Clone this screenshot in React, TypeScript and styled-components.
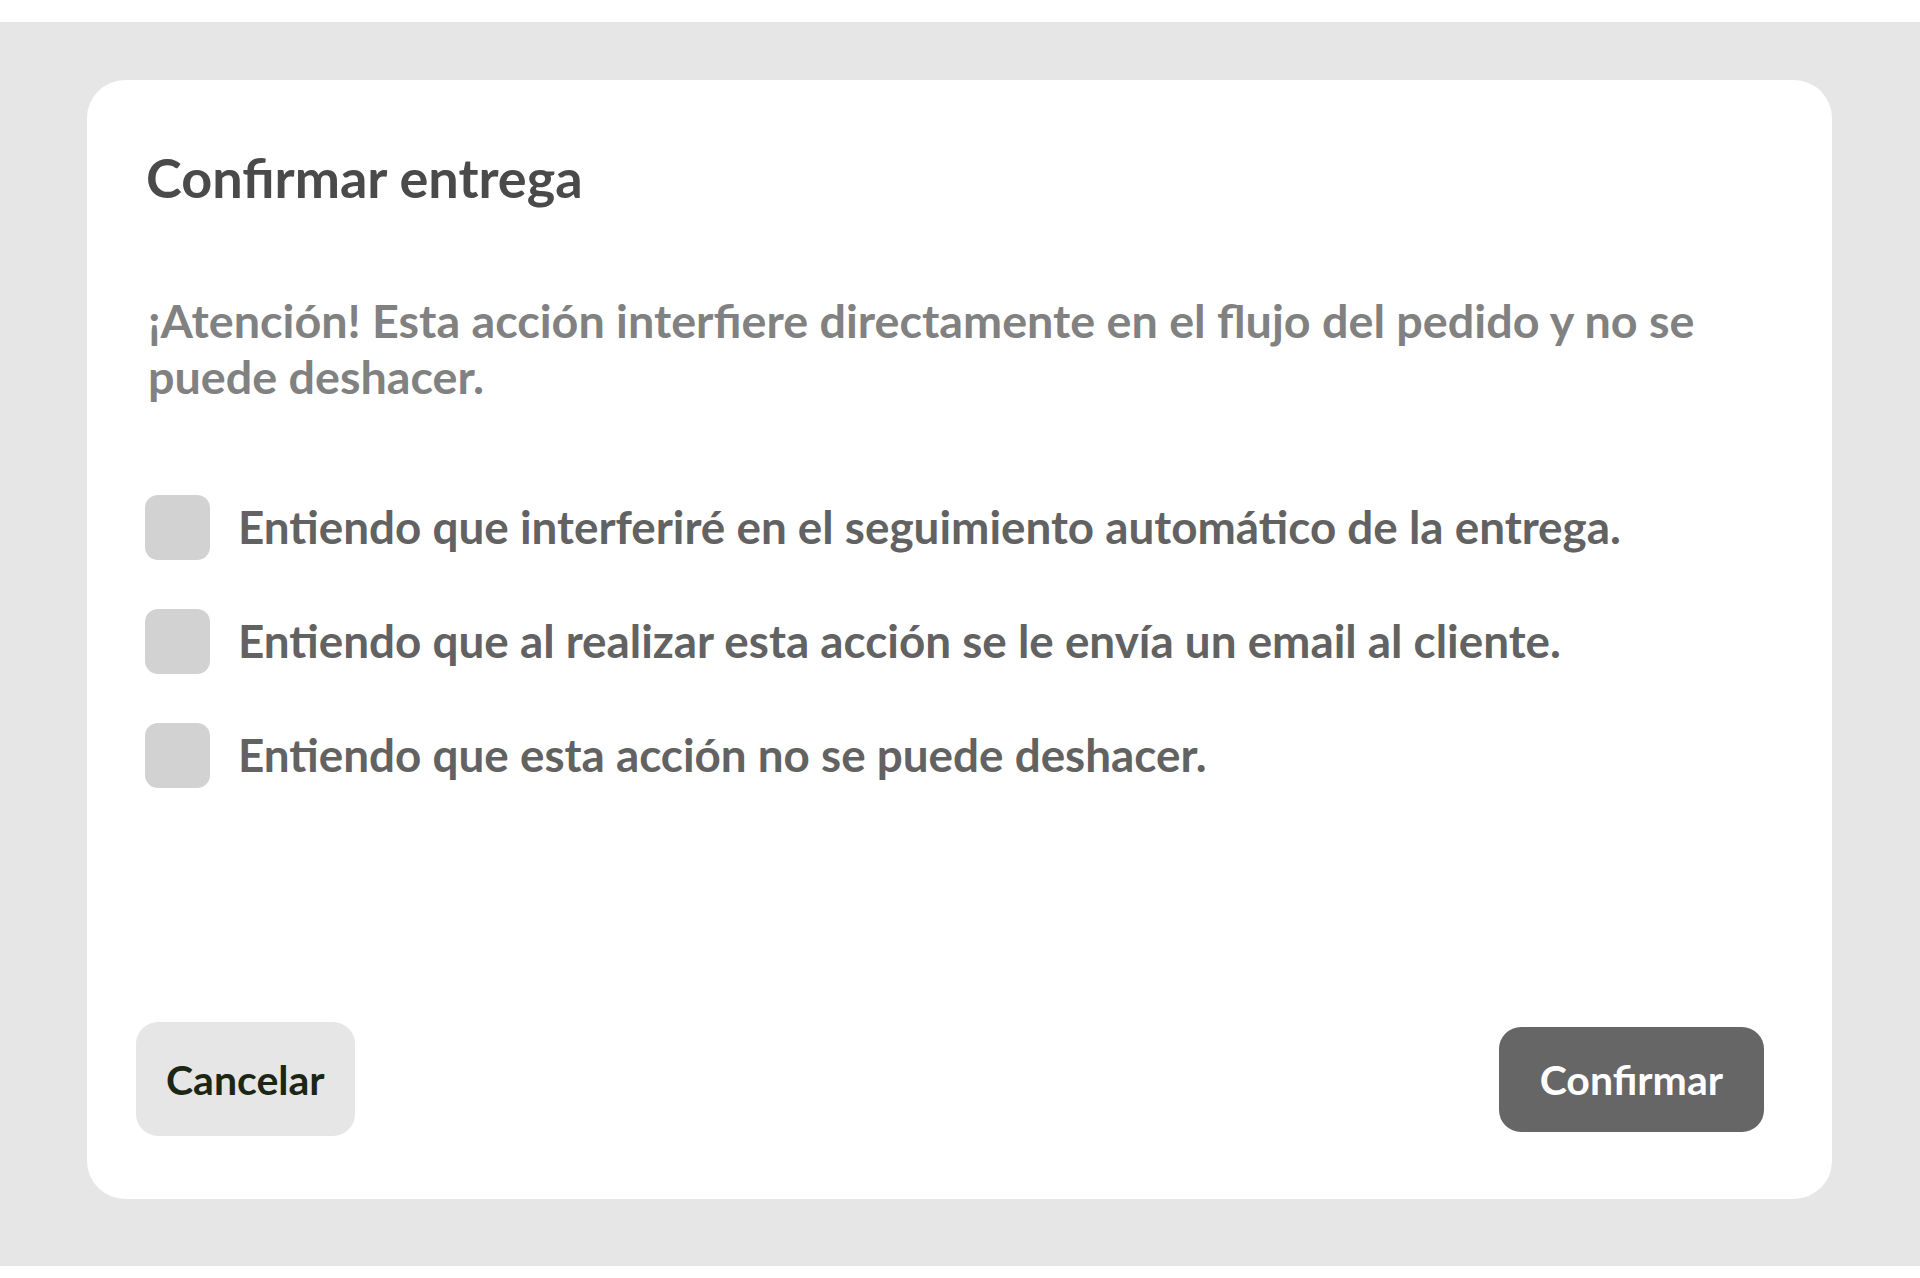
import { createGlobalStyle } from 'styled-components';
import styled from 'styled-components';

const GlobalStyle = createGlobalStyle`
    html, body {
        margin: 0;
        padding: 0;
        background: #ffffff;
    }
    body {
        font-family: Lato, "Open Sans", sans-serif;
    }
`;

// Page Styling Component
const Page = styled.div`
    padding-top: 22px;
    height: 1278px;
    box-sizing: border-box;
`;

// Backdrop Styling Component
const Backdrop = styled.div`
    background: #e6e6e6;
    height: 1244px;
    box-sizing: border-box;
    padding: 58px 88px 67px 87px;
    display: flex;
`;

// Card Styling Component
const Card = styled.div`
    flex: 1;
    background: #ffffff;
    border-radius: 38px;
    display: flex;
    flex-direction: column;
    padding: 66px 58px 63px 58px;
`;

// Title Styling Component
const Title = styled.h1`
    margin: 0;
    font-size: 54px;
    font-weight: 700;
    color: #4a4a4a;
    line-height: 1.2;
    padding-left: 1px;
`;

// Warning Styling Component
const Warning = styled.p`
    margin: 81px 0 0 0;
    font-size: 46.7px;
    font-weight: 700;
    color: #818181;
    line-height: 56px;
    padding-left: 3px;
`;

// Checklist Styling Component
const Checklist = styled.div`
    margin-top: 91px;
    display: flex;
    flex-direction: column;
    gap: 49px;
`;

// Row Styling Component
const Row = styled.label`
    display: flex;
    align-items: center;
    gap: 28px;
    cursor: pointer;
`;

// Box Styling Component
const Box = styled.span`
    width: 65px;
    height: 65px;
    border-radius: 13px;
    background: #d2d2d2;
    flex-shrink: 0;
`;

// Label Styling Component
const Label = styled.span`
    font-size: 45.8px;
    font-weight: 700;
    color: #626262;
    margin-bottom: 2px;
`;

// Footer Styling Component
const Footer = styled.div`
    margin-top: auto;
    display: flex;
    align-items: center;
    justify-content: space-between;
    margin-left: -9px;
    margin-right: 10px;
`;

// Button Styling Component
const Button = styled.button<{ $primary?: boolean }>`
    font-family: Lato, "Open Sans", sans-serif;
    font-size: 41px;
    font-weight: 700;
    border: none;
    cursor: pointer;
    border-radius: 22px;
    height: ${(p) => (p.$primary ? '105px' : '114px')};
    padding: ${(p) => (p.$primary ? '0 41px' : '0 30px')};
    background: ${(p) => (p.$primary ? '#666666' : '#e6e6e6')};
    color: ${(p) => (p.$primary ? '#ffffff' : '#1c2614')};
`;

const items = [
    'Entiendo que interferiré en el seguimiento automático de la entrega.',
    'Entiendo que al realizar esta acción se le envía un email al cliente.',
    'Entiendo que esta acción no se puede deshacer.',
];

const App = () => {
    return (
        <>
            <GlobalStyle />
            <Page>
                <Backdrop>
                    <Card>
                        <Title>Confirmar entrega</Title>
                        <Warning>
                            ¡Atención! Esta acción interfiere directamente en el flujo del pedido y no se puede deshacer.
                        </Warning>
                        <Checklist>
                            {items.map((text) => (
                                <Row key={text}>
                                    <Box />
                                    <Label>{text}</Label>
                                </Row>
                            ))}
                        </Checklist>
                        {/* Footer actions */}
                        <Footer>
                            <Button>Cancelar</Button>
                            <Button $primary>Confirmar</Button>
                        </Footer>
                    </Card>
                </Backdrop>
            </Page>
        </>
    );
};

export default App;
